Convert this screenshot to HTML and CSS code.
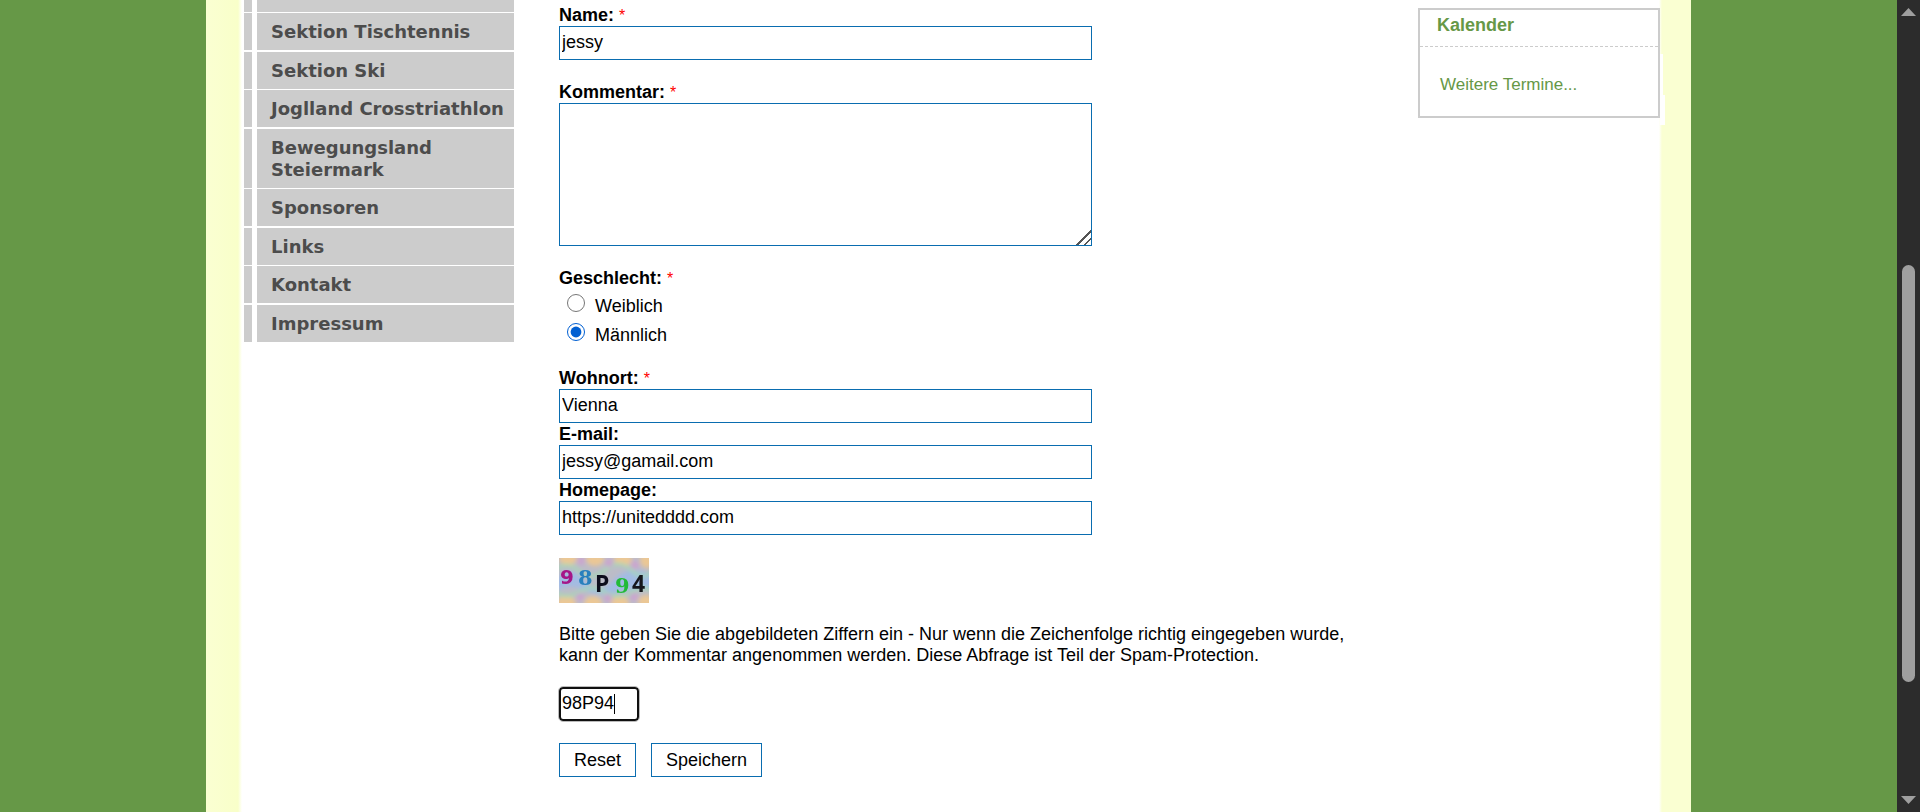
FILE: index.html
```html
<!DOCTYPE html>
<html lang="de">
<head>
<meta charset="utf-8">
<title>Gästebuch</title>
<link rel="stylesheet" href="styles.css">
</head>
<body>
<div class="backdrop">
  <div class="page">
    <nav class="menu" aria-label="Hauptmenü">
      <ul class="menu-list">
        <li class="menu-item menu-item-cut"></li>
        <li class="menu-item"><a class="menu-link" href="#">Sektion Tischtennis</a></li>
        <li class="menu-item"><a class="menu-link" href="#">Sektion Ski</a></li>
        <li class="menu-item"><a class="menu-link" href="#">Joglland Crosstriathlon</a></li>
        <li class="menu-item"><a class="menu-link" href="#">Bewegungsland Steiermark</a></li>
        <li class="menu-item"><a class="menu-link" href="#">Sponsoren</a></li>
        <li class="menu-item"><a class="menu-link" href="#">Links</a></li>
        <li class="menu-item"><a class="menu-link" href="#">Kontakt</a></li>
        <li class="menu-item"><a class="menu-link" href="#">Impressum</a></li>
      </ul>
    </nav>

    <main class="content">
      <form class="form">
        <div class="field">
          <label class="label" for="name">Name: <span class="required">*</span></label>
          <input class="input" id="name" type="text" value="jessy">
        </div>
        <div class="field">
          <label class="label" for="comment">Kommentar: <span class="required">*</span></label>
          <textarea class="input textarea" id="comment"></textarea>
        </div>
        <fieldset class="field choices">
          <legend class="label">Geschlecht: <span class="required">*</span></legend>
          <div class="choice"><input class="radio" type="radio" name="gender" id="female"><label for="female">Weiblich</label></div>
          <div class="choice"><input class="radio" type="radio" name="gender" id="male" checked><label for="male">Männlich</label></div>
        </fieldset>
        <div class="field">
          <label class="label" for="city">Wohnort: <span class="required">*</span></label>
          <input class="input" id="city" type="text" value="Vienna">
          <label class="label" for="email">E-mail:</label>
          <input class="input" id="email" type="text" value="jessy@gamail.com">
          <label class="label" for="homepage">Homepage:</label>
          <input class="input" id="homepage" type="text" value="https://unitedddd.com">
        </div>
        <svg class="captcha" viewBox="0 0 90 45" role="img" aria-label="Captcha">
          <defs>
            <filter id="haze" x="-20%" y="-20%" width="140%" height="140%"><feGaussianBlur stdDeviation="2"/></filter>
            <filter id="soft"><feGaussianBlur stdDeviation="0.5"/></filter>
          </defs>
          <rect width="90" height="45" fill="#bcbcc8"/>
          <g filter="url(#haze)">
            <path d="M-5 23Q10 5 25 22T55 22T98 18V34Q80 28 60 34T25 32T-5 34Z" fill="#a3bbe3"/>
            <g fill="#ebc795">
              <ellipse cx="9" cy="0" rx="9" ry="7"/><ellipse cx="36" cy="1" rx="9" ry="7"/><ellipse cx="64" cy="1" rx="9" ry="7"/><ellipse cx="88" cy="2" rx="7" ry="8"/>
              <ellipse cx="7" cy="45" rx="10" ry="7"/><ellipse cx="34" cy="45" rx="9" ry="7"/><ellipse cx="61" cy="45" rx="9" ry="7"/><ellipse cx="87" cy="44" rx="8" ry="7"/>
            </g>
            <path d="M-4 12Q8 2 20 13T46 12T72 12T96 12M-4 34Q8 42 20 34T46 34T72 34T96 34" fill="none" stroke="#a6d9b5" stroke-width="3"/>
            <g fill="#cba4cf"><circle cx="22" cy="3" r="4"/><circle cx="50" cy="5" r="4"/><circle cx="76" cy="7" r="4"/><circle cx="21" cy="39" r="4"/><circle cx="49" cy="40" r="4"/><circle cx="75" cy="39" r="4"/></g>
          </g>
          <g class="captcha-text" filter="url(#soft)">
            <text class="captcha-wide" x="1" y="26" font-size="20" fill="#a51387">9</text>
            <text class="captcha-serif" x="19" y="27" font-size="21" fill="#2980bd">8</text>
            <text x="36" y="34" font-size="23" fill="#10101c">P</text>
            <text class="captcha-serif" x="56" y="35" font-size="21" fill="#22ba38">9</text>
            <text x="73" y="34" font-size="23" fill="#15171e">4</text>
          </g>
        </svg>
        <label class="hint" for="code">Bitte geben Sie die abgebildeten Ziffern ein - Nur wenn die Zeichenfolge richtig eingegeben wurde, kann der Kommentar angenommen werden. Diese Abfrage ist Teil der Spam-Protection.</label>
        <div class="code-box"><input class="input code" id="code" type="text" value="98P94"><span class="caret"></span></div>
        <div class="actions">
          <button class="button" type="reset">Reset</button>
          <button class="button" type="button">Speichern</button>
        </div>
      </form>
    </main>

    <aside class="calendar">
      <h2 class="calendar-title">Kalender</h2>
      <div class="calendar-body"><a class="calendar-link" href="#">Weitere Termine...</a></div>
    </aside>
  </div>
</div>
<div class="scrollbar" aria-hidden="true">
  <svg class="arrow" viewBox="0 0 15 8"><path d="M7.500 0L15 8H0Z"/></svg>
  <div class="track"><div class="thumb"></div></div>
  <svg class="arrow" viewBox="0 0 15 8"><path d="M0 0H15L7.500 8Z"/></svg>
</div>
</body>
</html>
```

FILE: styles.css
```css
* {
  box-sizing: border-box;
}

body {
  display: flex;
  height: 100vh;
  margin: 0;
  overflow: hidden;
  background: #669847;
  color: #000;
  font: 18px/21px "Liberation Sans", Arial, sans-serif;
}

.backdrop {
  flex: 1;
  min-width: 0;
}

.page {
  display: grid;
  grid-template-columns: 270px 1fr 242px;
  gap: 45px;
  align-items: start;
  max-width: 1485px;
  min-height: 100vh;
  margin: 0 auto;
  padding: 0 31px 0 38px;
  background: linear-gradient(90deg, #faffd2 0, #f9ffc9 32px, #fff 36px, #fff calc(100% - 32px), #faffd2 calc(100% - 29px));
}

/* Menu */
.menu-list {
  margin: 0;
  padding: 0;
  list-style: none;
}

.menu-item {
  margin-bottom: 2px;
  border-left: 8px solid #ccc;
  padding-left: 5px;
}

.menu-item:nth-child(odd) {
  margin-bottom: 1px;
}

.menu-item-cut::before {
  content: "";
  display: block;
  height: 12px;
  background: #ccc;
}

.menu-link {
  display: block;
  padding: 8px 4px 7px 14px;
  background: #ccc;
  color: #4c4c4c;
  font: bold 18px/22px "DejaVu Sans", Verdana, sans-serif;
  text-decoration: none;
}

/* Form */
.form {
  display: flex;
  flex-direction: column;
  align-items: flex-start;
  padding-top: 4px;
}

.field {
  width: 533px;
  max-width: 100%;
  margin: 0 0 21px;
  border: 0;
  padding: 0;
}

.label {
  display: block;
  padding: 0;
  font-weight: bold;
  line-height: 22px;
}

.required {
  color: #f00;
  font-size: 16px;
  font-weight: normal;
  line-height: 1;
}

.input {
  display: block;
  width: 100%;
  height: 34px;
  border: 1px solid #0a6db0;
  padding: 0 2px 2px;
  background: #fff;
  color: #000;
  font: inherit;
}

.textarea {
  height: 143px;
  resize: both;
}

.textarea::-webkit-resizer {
  background: linear-gradient(135deg, transparent 50%, #555 50% 58%, transparent 58% 74%, #555 74% 82%, transparent 82%);
}

.choices {
  margin-bottom: 20px;
}

.choice {
  display: flex;
  gap: 10px;
  height: 29px;
  padding: 5px 0 0 8px;
  line-height: 25px;
}

.radio {
  width: 18px;
  height: 18px;
  margin: 0;
  accent-color: #005fd2;
}

.captcha {
  width: 90px;
  height: 45px;
  margin: 2px 0 21px;
}

.captcha-text {
  font-family: "Noto Sans", sans-serif;
  font-weight: bold;
}

.captcha-wide {
  font-family: "DejaVu Sans", sans-serif;
}

.captcha-serif {
  font-family: "DejaVu Serif", serif;
}

.hint {
  margin-bottom: 21px;
}

.code-box {
  position: relative;
  margin-bottom: 22px;
}

.code {
  width: 80px;
  border: 2px solid #101010;
  border-radius: 4px;
  padding: 0 1px 1px;
  outline: 1px solid #bbb;
}

.caret {
  position: absolute;
  top: 7px;
  left: 55px;
  width: 1px;
  height: 20px;
  background: #000;
}

.actions {
  display: flex;
  gap: 15px;
}

.button {
  height: 34px;
  border: 1px solid #0a6db0;
  padding: 0 14px;
  background: #fff;
  color: #000;
  font: inherit;
}

/* Calendar */
.calendar {
  position: relative;
  margin-top: 8px;
  border: 2px solid #ccc;
  background: #fff;
}

.calendar::before,
.calendar::after {
  content: "";
  position: absolute;
  left: 100%;
  background: #fff;
}

.calendar::before {
  top: 44px;
  width: 5px;
  height: 42px;
  margin-left: 2px;
  width: 3px;
}

.calendar::after {
  top: 85px;
  width: 5px;
  height: 30px;
  margin-left: 2px;
}

.calendar-title {
  margin: 0;
  border-bottom: 1px dashed #ccc;
  padding: 5px 17px 10px;
  color: #669847;
  font-size: 18px;
  line-height: 21px;
}

.calendar-body {
  padding: 27px 20px 21px;
}

.calendar-link {
  display: block;
  color: #669847;
  font-size: 17px;
  line-height: 21px;
  text-decoration: none;
}

/* Scrollbar */
.scrollbar {
  display: flex;
  flex-direction: column;
  align-items: center;
  width: 23px;
  padding: 8px 0;
  background: #2c2c2c;
}

.arrow {
  width: 15px;
  height: 8px;
  fill: #9f9f9f;
}

.track {
  flex: 1;
  width: 13px;
}

.thumb {
  height: 53.5%;
  margin-top: 249px;
  border-radius: 7px;
  background: #9f9f9f;
}
```
